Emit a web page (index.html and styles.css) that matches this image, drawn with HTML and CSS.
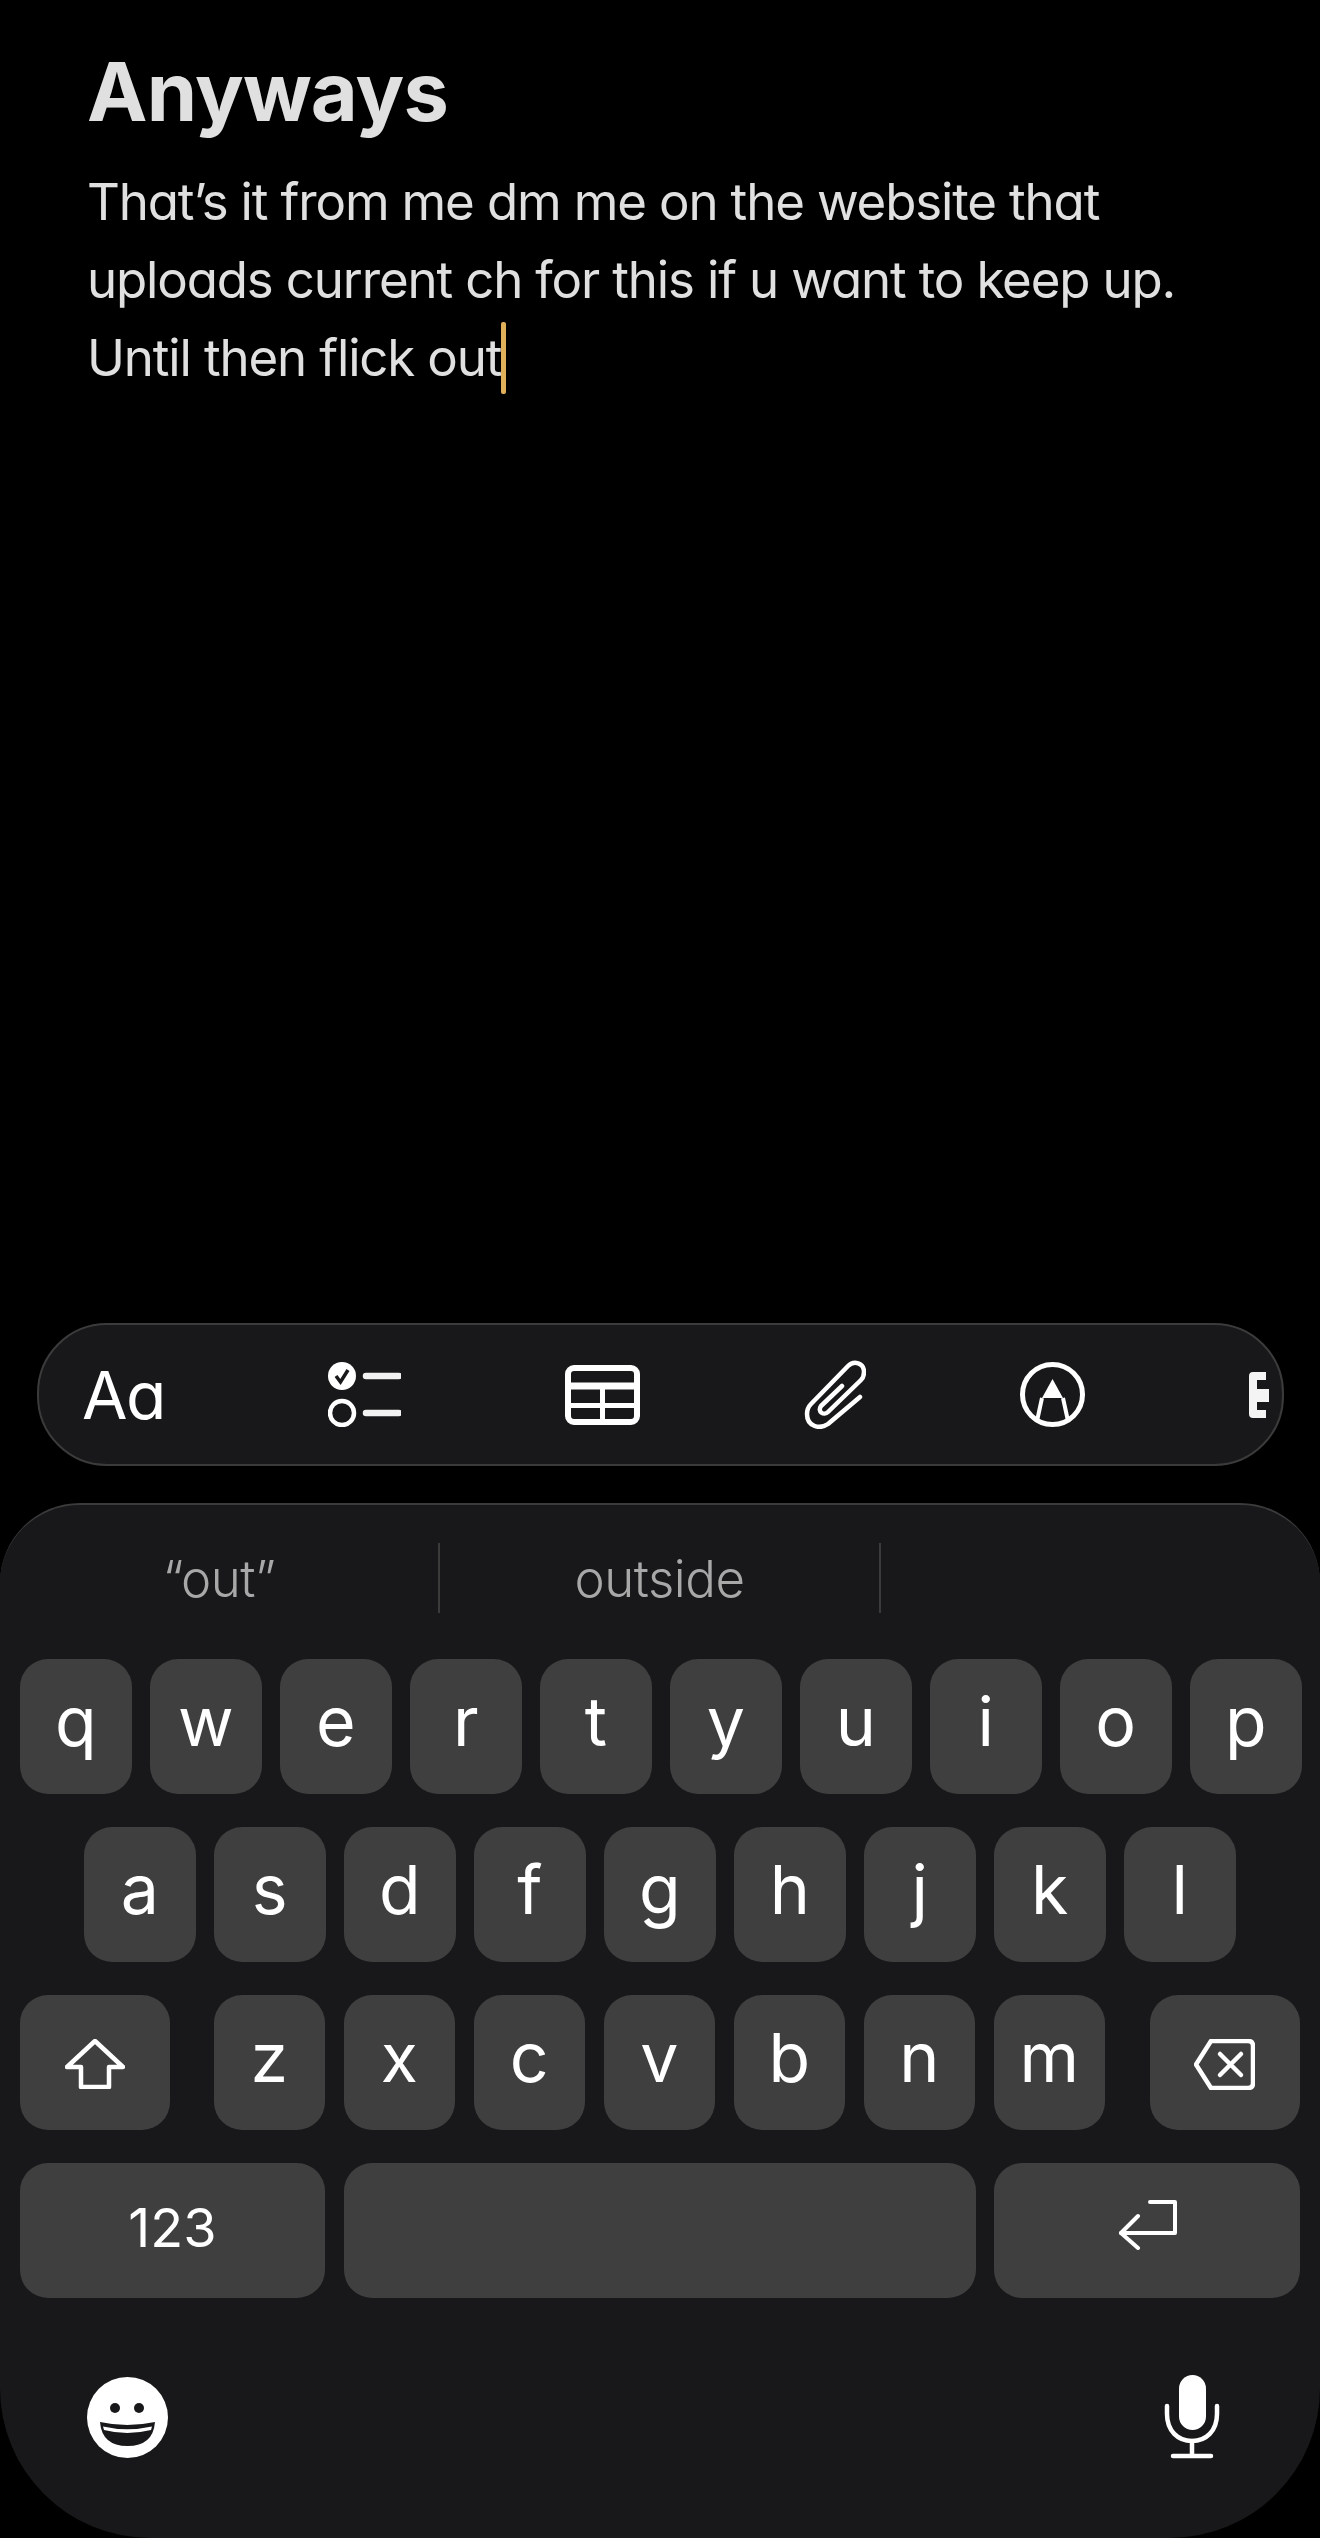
FILE: index.html
```html
<!DOCTYPE html>
<html lang="en">
<head>
    <meta charset="UTF-8">
    <title>Notes</title>
    <link rel="stylesheet" href="styles.css">
</head>
<body>
    <div class="page">
        <div class="note">
            <h1>Anyways</h1>
            <p>That’s it from me dm me on the website that<br>uploads current ch for this if u want to keep up.<br>Until then flick out<span class="caret"></span></p>
        </div>

        <div class="toolbar">
            <span class="tool-text">Aa</span>
            <svg class="tool" width="73" height="65" viewBox="0 0 73 65">
                <circle cx="14" cy="14" r="14" fill="#fff"/>
                <path d="M8 14l4.500 6L20 8" fill="none" stroke="#18181a" stroke-width="3.500"/>
                <circle cx="14" cy="51" r="12" fill="none" stroke="#fff" stroke-width="4.500"/>
                <path d="M38 14h33M38 51h33" stroke="#f2f2f2" stroke-width="6.500" stroke-linecap="round"/>
            </svg>
            <svg class="tool" width="75" height="60" viewBox="0 0 75 60">
                <rect x="3" y="3" width="69" height="54" rx="6" fill="none" stroke="#fff" stroke-width="6"/>
                <path d="M2 21h71" stroke="#fff" stroke-width="7"/>
                <path d="M2 40.500h71M37.500 21v37" stroke="#fff" stroke-width="5"/>
            </svg>
            <svg class="tool" width="62" height="69" viewBox="0 0 62 69">
                <path d="M56 37L24 64C15 70 3 66 3 54C3 50 4 47 7 44L44 6C50 0 60 3 60 12C60 16 59 18 57 20L24 52C20 56 13 52 17 46L38 26" fill="none" stroke="#fff" stroke-width="4.500" stroke-linecap="round" stroke-linejoin="round"/>
            </svg>
            <svg class="tool tool-markup" width="65" height="65" viewBox="0 0 65 65">
                <circle cx="32.500" cy="32.500" r="30" fill="none" stroke="#fff" stroke-width="5"/>
                <path d="M32.500 17L43 36H22Z" fill="#fff"/>
                <path d="M22 36L17 59M43 36L48 59" stroke="#fff" stroke-width="4"/>
            </svg>
            <svg class="tool" width="20" height="46" viewBox="0 0 20 46">
                <path d="M4 0H17V8H8V17H20V30H8V38H17V46H4Q0 46 0 42V4Q0 0 4 0Z" fill="#f4f4f4"/>
            </svg>
        </div>

        <div class="keyboard">
            <div class="suggestions">
                <div class="suggestion">“out”</div>
                <div class="suggestion">outside</div>
                <div class="suggestion"></div>
            </div>

            <div class="row">
                <div class="key">q</div>
                <div class="key">w</div>
                <div class="key">e</div>
                <div class="key">r</div>
                <div class="key">t</div>
                <div class="key">y</div>
                <div class="key">u</div>
                <div class="key">i</div>
                <div class="key">o</div>
                <div class="key">p</div>
            </div>
            <div class="row row-center">
                <div class="key">a</div>
                <div class="key">s</div>
                <div class="key">d</div>
                <div class="key">f</div>
                <div class="key">g</div>
                <div class="key">h</div>
                <div class="key">j</div>
                <div class="key">k</div>
                <div class="key">l</div>
            </div>
            <div class="row">
                <div class="key key-wide">
                    <svg width="60" height="50" viewBox="0 0 60 50">
                        <path d="M30 2L58 28H44V48H16V28H2Z" fill="none" stroke="#fff" stroke-width="4.500" stroke-linejoin="round"/>
                    </svg>
                </div>
                <div class="key key-after-shift">z</div>
                <div class="key">x</div>
                <div class="key">c</div>
                <div class="key">v</div>
                <div class="key">b</div>
                <div class="key">n</div>
                <div class="key key-before-back">m</div>
                <div class="key key-wide">
                    <svg width="61" height="51" viewBox="0 0 61 51">
                        <path d="M17 2H54Q59 2 59 7V44Q59 49 54 49H17L2 25.500Z" fill="none" stroke="#fff" stroke-width="4.500" stroke-linejoin="round"/>
                        <path d="M26 15L47 36M47 15L26 36" stroke="#fff" stroke-width="4.500" stroke-linecap="round"/>
                    </svg>
                </div>
            </div>
            <div class="row">
                <div class="key key-num">123</div>
                <div class="key key-space"></div>
                <div class="key key-enter">
                    <svg width="59" height="50" viewBox="0 0 59 50">
                        <path d="M32 2H57V33H3" fill="none" stroke="#fff" stroke-width="4" stroke-linecap="round" stroke-linejoin="round"/>
                        <path d="M20 16L3 33L20 48" fill="none" stroke="#fff" stroke-width="4" stroke-linecap="round" stroke-linejoin="round"/>
                    </svg>
                </div>
            </div>

            <div class="bottom-bar">
                <svg class="emoji" width="81" height="81" viewBox="0 0 81 81">
                    <circle cx="40.500" cy="40.500" r="40.500" fill="#fff"/>
                    <circle cx="28" cy="31" r="5" fill="#18181a"/>
                    <circle cx="52" cy="31" r="5" fill="#18181a"/>
                    <path d="M13 45Q40 51 68 45Q66 69 40.500 69Q15 69 13 45Z" fill="#18181a"/>
                    <path d="M16 49.500Q40 55 65 49.500L64 53Q40 59 17 53Z" fill="#fff"/>
                </svg>
                <svg width="56" height="84" viewBox="0 0 56 84">
                    <rect x="15" y="0" width="27" height="55" rx="13.500" fill="#fff"/>
                    <path d="M3 31V39C3 56 14 66 28 66C42 66 53 56 53 39V31" fill="none" stroke="#fff" stroke-width="4.500" stroke-linecap="round"/>
                    <path d="M28 66V81M9 81H47" stroke="#fff" stroke-width="4.500" stroke-linecap="round"/>
                </svg>
            </div>
        </div>
    </div>
</body>
</html>
```

FILE: styles.css
```css
body {
    margin: 0;
    background: #000;
    font-family: 'Inter', 'Liberation Sans', sans-serif;
}
.page {
    display: flex;
    flex-direction: column;
    height: 2538px;
    overflow: hidden;
}
.note {
    flex: 1;
    padding: 44px 0 0 87px;
    color: #e0e0e0;
}
h1 {
    margin: 0;
    font-size: 81px;
    line-height: 96px;
    font-weight: 700;
    letter-spacing: -0.800px;
}
p {
    margin: 23px 0 0;
    font-size: 51px;
    line-height: 78px;
    font-weight: 375;
    letter-spacing: -1.150px;
    font-feature-settings: 'cv11';
}
.caret {
    display: inline-block;
    width: 5px;
    height: 72px;
    margin-bottom: -18px;
    background: #e0b05a;
    border-radius: 2px;
}
.toolbar {
    display: flex;
    align-items: center;
    gap: 164px;
    height: 143px;
    margin: 0 36px 0 37px;
    padding-left: 43px;
    box-sizing: border-box;
    background: #18181a;
    border: 2px solid #3b3b3c;
    border-radius: 70px;
}
.tool-text {
    width: 82px;
    font-size: 66px;
    font-weight: 400;
    letter-spacing: -1.500px;
    color: #fff;
    font-feature-settings: 'cv11';
}
.tool {
    flex: none;
}
.tool-markup {
    margin-left: -10px;
}
.keyboard {
    height: 1035px;
    margin-top: 37px;
    padding-top: 38px;
    box-sizing: border-box;
    background: #18181a;
    border-top: 2px solid #3b3b3c;
    border-radius: 80px 80px 150px 150px;
}
.suggestions {
    display: grid;
    grid-template-columns: 440px 441px 1fr;
    height: 70px;
    margin-bottom: 46px;
}
.suggestion {
    display: flex;
    align-items: center;
    justify-content: center;
    font-size: 51px;
    font-weight: 350;
    letter-spacing: -0.500px;
    color: #a8a8a8;
    border-right: 2px solid #3b3b3c;
}
.suggestion:last-child {
    border-right: none;
}
.row {
    display: flex;
    gap: 18.500px;
    padding: 0 20px;
    margin-bottom: 33px;
}
.row-center {
    padding: 0 84px;
}
.key {
    display: flex;
    flex: none;
    align-items: center;
    justify-content: center;
    width: 111.500px;
    height: 135px;
    background: #3f3f40;
    border-radius: 28px;
    color: #fff;
    font-size: 68px;
    font-weight: 400;
    padding-bottom: 11px;
    box-sizing: border-box;
}
.key-wide {
    width: 150px;
    padding-bottom: 0;
    padding-top: 3px;
}
.key-after-shift {
    margin-left: 25px;
}
.key-before-back {
    margin-right: 26px;
}
.key-num {
    width: 305px;
    font-size: 54px;
    padding-bottom: 6px;
}
.key-space {
    flex: 1;
}
.key-enter {
    width: 306px;
}
.bottom-bar {
    display: flex;
    align-items: center;
    justify-content: space-between;
    padding: 44px 100px 0 87px;
}
```
